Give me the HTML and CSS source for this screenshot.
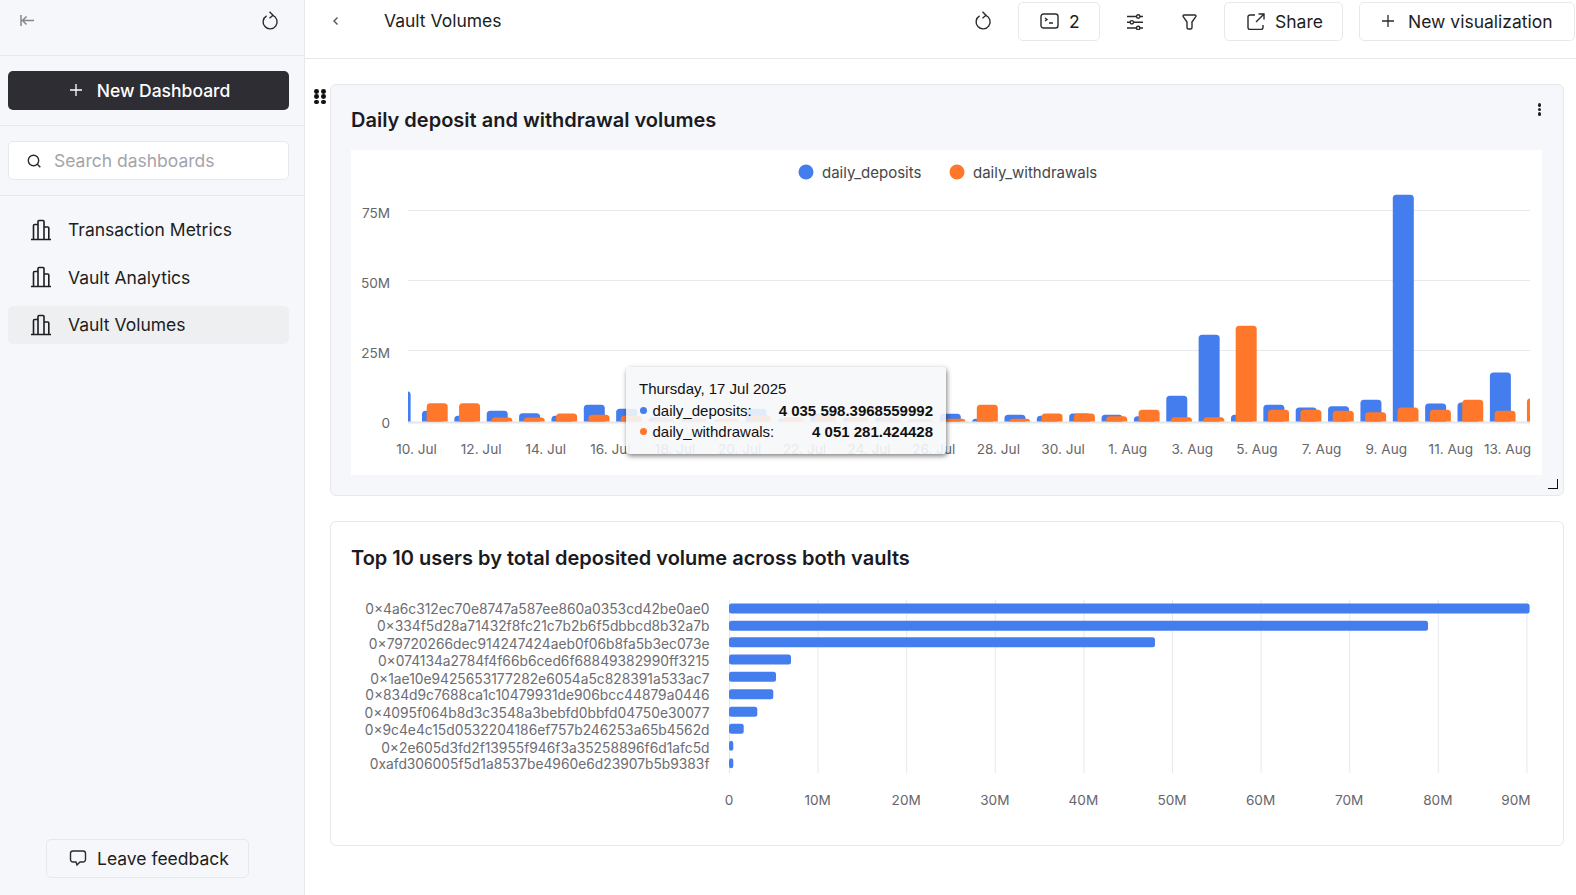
FILE: index.html
```html
<!DOCTYPE html>
<html lang="en">
<head>
    <meta charset="UTF-8">
    <title>Vault Volumes</title>
    <link rel="stylesheet" href="styles.css">
</head>
<body>
    <aside class="sidebar">
        <div class="side-top">
            <svg class="icon-collapse" width="14" height="11" viewBox="0 0 14 11"><path d="M1 0v11M14 5.500H2.500M6.500 1.500l-4 4 4 4"/></svg>
            <svg class="icon" width="18" height="20" viewBox="0 0 18 20"><path d="M11.800 4.400a7 7 0 1 1-6.200.4M8.500.8 12 4.200 8.500 7.200"/></svg>
        </div>
        <div class="side-section">
            <button class="btn-dark">
                <svg class="icon-plus" width="14" height="14" viewBox="0 0 14 14"><path d="M7 1v12M1 7h12"/></svg>
                New Dashboard
            </button>
        </div>
        <div class="side-section">
            <div class="search">
                <svg class="icon" width="16" height="16" viewBox="0 0 16 16"><circle cx="7.500" cy="7.500" r="5.200"/><path d="m11.300 11.300 3 3"/></svg>
                <span>Search dashboards</span>
            </div>
        </div>
        <nav class="dash-list">
            <a class="dash-item"><svg class="icon icon-bars" width="22" height="22" viewBox="0 0 22 22"><path d="M1 20.500h20M3.500 20V6.500a1 1 0 0 1 1-1H8M8 20V2.500a1 1 0 0 1 1-1h4a1 1 0 0 1 1 1V20M14 8h3.800a1 1 0 0 1 1 1v11"/></svg>Transaction Metrics</a>
            <a class="dash-item"><svg class="icon icon-bars" width="22" height="22" viewBox="0 0 22 22"><path d="M1 20.500h20M3.500 20V6.500a1 1 0 0 1 1-1H8M8 20V2.500a1 1 0 0 1 1-1h4a1 1 0 0 1 1 1V20M14 8h3.800a1 1 0 0 1 1 1v11"/></svg>Vault Analytics</a>
            <a class="dash-item active"><svg class="icon icon-bars" width="22" height="22" viewBox="0 0 22 22"><path d="M1 20.500h20M3.500 20V6.500a1 1 0 0 1 1-1H8M8 20V2.500a1 1 0 0 1 1-1h4a1 1 0 0 1 1 1V20M14 8h3.800a1 1 0 0 1 1 1v11"/></svg>Vault Volumes</a>
        </nav>
        <button class="btn-feedback">
            <svg class="icon" width="18" height="18" viewBox="0 0 18 18"><path d="M4 2h10a2.500 2.500 0 0 1 2.500 2.500v6A2.500 2.500 0 0 1 14 13h-3l-3 3-1-3H4a2.500 2.500 0 0 1-2.500-2.500v-6A2.500 2.500 0 0 1 4 2z"/></svg>
            Leave feedback
        </button>
    </aside>

    <main class="main">
        <header class="topbar">
            <svg class="icon chevron" width="8" height="10" viewBox="0 0 8 10"><path d="M5.500 1.500 2 5l3.500 3.500"/></svg>
            <h1 class="page-title">Vault Volumes</h1>
            <svg class="icon reload" width="18" height="20" viewBox="0 0 18 20"><path d="M11.800 4.400a7 7 0 1 1-6.200.4M8.500.8 12 4.200 8.500 7.200"/></svg>
            <button class="btn btn-queries">
                <svg class="icon" width="19" height="16" viewBox="0 0 19 16"><rect x="1" y="1" width="17" height="14" rx="2.500"/><path d="m5 5 2 1.500L5 8M9 10h4"/></svg>
                2
            </button>
            <svg class="icon sliders" width="16" height="16" viewBox="0 0 16 16"><path d="M0 2.500h9.500M13 2.500h3M0 8.300h3M6.500 8.300H16M0 14h9.500M13 14h3"/><circle cx="11.200" cy="2.500" r="1.700"/><circle cx="4.800" cy="8.300" r="1.700"/><circle cx="11.200" cy="14" r="1.700"/></svg>
            <svg class="icon funnel" width="15" height="16" viewBox="0 0 15 16"><path d="M2 1h11a1 1 0 0 1 .8 1.600L10 8v5.500A1.500 1.500 0 0 1 8.500 15h-2A1.500 1.500 0 0 1 5 13.500V8L1.200 2.600A1 1 0 0 1 2 1z"/></svg>
            <button class="btn btn-share">
                <svg class="icon" width="18" height="17" viewBox="0 0 18 17"><path d="M8 2H3a2 2 0 0 0-2 2v10.500a2 2 0 0 0 2 2h11a2 2 0 0 0 2-2V12M9 9l8-8M11.500 1H17v5.500"/></svg>
                Share
            </button>
            <button class="btn btn-new">
                <svg class="icon-plus dark" width="12" height="12" viewBox="0 0 12 12"><path d="M6 0v12M0 6h12"/></svg>
                New visualization
            </button>
        </header>

        <section class="panel panel-gray">
            <span class="drag-handle"><i></i><i></i><i></i><i></i><i></i><i></i></span>
            <span class="kebab"><i></i><i></i><i></i></span>
            <h2 class="panel-title">Daily deposit and withdrawal volumes</h2>
            <div class="chart-box">
                <svg id="daily-chart" class="chart" width="1191" height="325" viewBox="351 150 1191 325"></svg>
                <div class="tooltip">
                    <div class="tooltip-date">Thursday, 17 Jul 2025</div>
                    <div class="tooltip-row"><i class="dot dot-blue"></i><span>daily_deposits:</span><b>4 035 598.3968559992</b></div>
                    <div class="tooltip-row"><i class="dot dot-orange"></i><span>daily_withdrawals:</span><b>4 051 281.424428</b></div>
                </div>
            </div>
            <span class="resize-corner"></span>
        </section>

        <section class="panel panel-white">
            <h2 class="panel-title">Top 10 users by total deposited volume across both vaults</h2>
            <svg id="top-chart" class="chart" width="1212" height="238" viewBox="351 587 1212 238"></svg>
        </section>
    </main>

    <script src="chart.js"></script>
</body>
</html>
```

FILE: styles.css
```css
* {
    box-sizing: border-box;
}
body {
    margin: 0;
    height: 895px;
    overflow: hidden;
    display: flex;
    font-family: Inter, "Noto Sans", sans-serif;
    font-size: 17.500px;
    color: #1d1d22;
    background-color: #fff;
}
button {
    font-family: inherit;
    font-size: 17.500px;
    color: inherit;
    cursor: pointer;
}
.icon {
    fill: none;
    stroke: #2a2a2f;
    stroke-width: 1.4;
    flex-shrink: 0;
}
.icon-bars {
    stroke: #1d1d22;
    stroke-width: 1.6;
}
.icon-collapse {
    margin-top: 4px;
    fill: none;
    stroke: #85858b;
    stroke-width: 1.5;
}
.icon-plus {
    fill: none;
    stroke: #fff;
    stroke-width: 1.3;
}
.icon-plus.dark {
    stroke: #2a2a2f;
}

/* sidebar */
.sidebar {
    width: 305px;
    flex-shrink: 0;
    display: flex;
    flex-direction: column;
    background-color: #f5f7fa;
    border-right: 1px solid #e6e8ec;
    padding-bottom: 17px;
}
.side-top {
    height: 56px;
    display: flex;
    align-items: flex-start;
    justify-content: space-between;
    padding: 11px 25px 0 20px;
    border-bottom: 1px solid #e6e8ec;
}
.side-section {
    height: 70px;
    padding: 15px 15px 0 8px;
    border-bottom: 1px solid #e6e8ec;
}
.btn-dark {
    width: 281px;
    height: 39px;
    display: flex;
    align-items: center;
    justify-content: center;
    gap: 14px;
    padding: 0 0 1px 2px;
    border: none;
    border-radius: 5px;
    color: #fff;
    font-weight: 500;
    background-color: #2e2d33;
}
.search {
    width: 281px;
    height: 39px;
    display: flex;
    align-items: center;
    gap: 12px;
    padding-left: 17px;
    color: #a3a4aa;
    background-color: #fff;
    border: 1px solid #e6e8ec;
    border-radius: 5px;
}
.dash-list {
    padding: 15px 15px 0 8px;
}
.dash-item {
    height: 38px;
    display: flex;
    align-items: center;
    gap: 16px;
    padding-left: 22px;
    padding-bottom: 1px;
    margin-bottom: 9.500px;
    border-radius: 5px;
}
.dash-item.active {
    background-color: #eeeff1;
}
.btn-feedback {
    width: 203px;
    height: 39px;
    margin: auto 0 0 46px;
    display: flex;
    align-items: center;
    gap: 10px;
    padding: 0 0 1px 22px;
    background-color: #f5f7fa;
    border: 1px solid #e6e8ec;
    border-radius: 5px;
}

/* top bar */
.main {
    flex: 1;
    min-width: 0;
}
.topbar {
    height: 59px;
    display: flex;
    align-items: flex-start;
    padding: 2px 1px 0 27px;
    border-bottom: 1px solid #e6e8ec;
}
.chevron {
    margin-top: 14px;
    stroke: #55555b;
}
.page-title {
    margin: 6px 0 0 44px;
    font-size: 17.500px;
    font-weight: 400;
    line-height: 26px;
}
.reload {
    margin: 9px 0 0 auto;
}
.btn {
    height: 39px;
    display: flex;
    align-items: center;
    background-color: #fff;
    border: 1px solid #e6e8ec;
    border-radius: 5px;
    padding-top: 0;
    padding-bottom: 1px;
    padding-right: 0;
}
.btn-queries {
    width: 82px;
    margin-left: 26px;
    gap: 10px;
    padding-left: 21px;
}
.sliders {
    margin: 12px 0 0 27px;
}
.funnel {
    margin: 12px 0 0 38.500px;
}
.btn-share {
    width: 119px;
    margin-left: 27.500px;
    gap: 10px;
    padding-left: 22px;
}
.btn-new {
    width: 216px;
    margin-left: 16px;
    gap: 14px;
    padding-left: 22px;
}

/* panels */
.panel {
    position: relative;
    margin: 25px 12px 0 25px;
    padding: 0 21px 19px 20px;
    height: 325px;
    border: 1px solid #e6e8ec;
    border-radius: 6px;
}
.panel-gray {
    height: 412px;
    background-color: #f5f7fa;
}
.panel-title {
    margin: 0;
    height: 65px;
    padding-top: 21px;
    font-size: 20px;
    font-weight: 600;
    line-height: 28px;
    color: #1a1a1f;
}
.panel-white .panel-title {
    padding-top: 22px;
}
.chart-box {
    position: relative;
    height: 325px;
    background-color: #fff;
}
.chart {
    display: block;
    overflow: hidden;
    font-size: 13.600px;
}
.chart text {
    fill: #66666c;
}
.chart .legend-text {
    font-size: 15px;
    fill: #46464c;
}
.chart .addr {
    font-size: 13.800px;
    fill: #6c6c72;
}
.drag-handle {
    position: absolute;
    left: -17px;
    top: 4px;
    width: 12px;
    display: grid;
    grid-template-columns: 5px 5px;
    gap: 0.500px 2px;
}
.drag-handle i {
    width: 4.800px;
    height: 4.800px;
    border-radius: 50%;
    background-color: #111;
}
.kebab {
    position: absolute;
    right: 22px;
    top: 18px;
    display: flex;
    flex-direction: column;
    gap: 1px;
}
.kebab i {
    width: 3.500px;
    height: 3.500px;
    border-radius: 50%;
    background-color: #222;
}
.resize-corner {
    position: absolute;
    right: 5px;
    bottom: 6px;
    width: 10px;
    height: 10px;
    border-right: 1px solid #111;
    border-bottom: 1px solid #111;
}

/* tooltip */
.tooltip {
    position: absolute;
    left: 275px;
    top: 217px;
    width: 320px;
    height: 87px;
    padding: 10px 13px 0 14px;
    font-family: "Liberation Sans", Arial, sans-serif;
    font-size: 15px;
    color: #111;
    background-color: rgba(245, 247, 250, 0.9);
    border-radius: 4px;
    box-shadow: 1px 2px 5px rgba(0, 0, 0, 0.5);
}
.tooltip-date {
    margin-left: -1px;
    line-height: 23px;
}
.tooltip-row {
    display: flex;
    align-items: center;
    line-height: 21px;
}
.tooltip-row b {
    margin-left: auto;
}
.dot {
    width: 7px;
    height: 7px;
    margin-right: 5.500px;
    border-radius: 50%;
}
.dot-blue {
    background-color: #447dee;
}
.dot-orange {
    background-color: #ff772a;
}
```

FILE: chart.js
```js
var NS = 'http://www.w3.org/2000/svg';
var BLUE = '#447dee';
var ORANGE = '#ff772a';

function add(svg, tag, attrs, text) {
    var el = document.createElementNS(NS, tag);
    for (var k in attrs) el.setAttribute(k, attrs[k]);
    if (text) el.textContent = text;
    svg.appendChild(el);
    return el;
}

function drawDaily() {
    var svg = document.getElementById('daily-chart');
    var base = 421.5;

    [210.5, 280.5, 350.5].forEach(function (y) {
        add(svg, 'line', { x1: 408, x2: 1530, y1: y, y2: y, stroke: '#e8e9ec' });
    });
    add(svg, 'line', { x1: 408, x2: 1530, y1: 422.5, y2: 422.5, stroke: '#e4e5e9', 'stroke-width': 2 });

    [['75M', 214], ['50M', 284], ['25M', 354], ['0', 424]].forEach(function (t) {
        add(svg, 'text', { x: 390, y: t[1], 'text-anchor': 'end', 'dominant-baseline': 'middle' }, t[0]);
    });

    // legend
    add(svg, 'circle', { cx: 806, cy: 172, r: 7.5, fill: BLUE });
    add(svg, 'text', { x: 822, y: 173.5, 'class': 'legend-text', 'dominant-baseline': 'middle' }, 'daily_deposits');
    add(svg, 'circle', { cx: 957, cy: 172, r: 7.5, fill: ORANGE });
    add(svg, 'text', { x: 973, y: 173.5, 'class': 'legend-text', 'dominant-baseline': 'middle' }, 'daily_withdrawals');

    // bars, index 0 is the one cut off by the plot edge
    var blue = [30, 10.7, 5.7, 10.7, 8.3, 5.7, 16.7, 12.7, 4, 3, 2, 12.7, 3, 7.7, 4, 4, 2, 7.7, 2.7, 6.7, 5.7, 8, 6.7, 5.3, 25.7, 86.7, 6.7, 16.7, 14, 15.3, 21.7, 226.7, 18, 19, 49, 0];
    var orange = [0, 18.3, 18.3, 4, 4, 8, 6.7, 5.7, 2.7, 3, 3, 5.7, 4.3, 5.7, 4.3, 3, 2.3, 2.7, 16.7, 2.7, 8, 8, 5.3, 11.7, 4.3, 4.3, 95.7, 11.7, 11.7, 10.7, 9.3, 14, 11.7, 21.7, 10.7, 23];

    var clip = add(add(svg, 'defs', {}), 'clipPath', { id: 'plot' });
    add(clip, 'rect', { x: 408, y: 180, width: 1122, height: base - 180 });
    var bars = add(svg, 'g', { 'clip-path': 'url(#plot)' });
    blue.forEach(function (h, n) {
        var x = 422 + (n - 1) * 32.36;
        if (h) add(bars, 'rect', { x: x, y: base - h, width: 21, height: h + 5, rx: 3.5, fill: BLUE });
    });
    orange.forEach(function (h, n) {
        var x = 426.7 + (n - 1) * 32.36;
        if (h) add(bars, 'rect', { x: x, y: base - h, width: 21, height: h + 5, rx: 3.5, fill: ORANGE });
    });

    var labels = ['10. Jul', '12. Jul', '14. Jul', '16. Jul', '18. Jul', '20. Jul', '22. Jul', '24. Jul', '26. Jul', '28. Jul', '30. Jul', '1. Aug', '3. Aug', '5. Aug', '7. Aug', '9. Aug', '11. Aug'];
    labels.forEach(function (t, n) {
        add(svg, 'text', { x: 416.5 + n * 64.65, y: 450, 'text-anchor': 'middle', 'dominant-baseline': 'middle' }, t);
    });
    add(svg, 'text', { x: 1507.5, y: 450, 'text-anchor': 'middle', 'dominant-baseline': 'middle' }, '13. Aug');
}

function drawTop() {
    var svg = document.getElementById('top-chart');
    var left = 729;
    var step = 88.6;

    for (var n = 0; n <= 9; n++) {
        var gx = left + n * step + 0.5;
        add(svg, 'line', { x1: gx, x2: gx, y1: 600, y2: 773, stroke: n ? '#e8e9ec' : '#e4e5e9' });
        var lx = n == 9 ? 1516 : left + n * step;
        add(svg, 'text', { x: lx, y: 801, 'text-anchor': 'middle', 'dominant-baseline': 'middle' }, n ? n * 10 + 'M' : '0');
    }

    // address, bar length, bar centre, label centre
    var rows = [
        ['0×4a6c312ec70e8747a587ee860a0353cd42be0ae0', 800.6, 609, 610],
        ['0×334f5d28a71432f8fc21c7b2b6f5dbbcd8b32a7b', 699, 626.3, 627.5],
        ['0×79720266dec914247424aeb0f06b8fa5b3ec073e', 426, 642.7, 645],
        ['0×074134a2784f4f66b6ced6f68849382990ff3215', 62, 660, 662],
        ['0×1ae10e9425653177282e6054a5c828391a533ac7', 47, 677.3, 680],
        ['0×834d9c7688ca1c10479931de906bcc44879a0446', 44.3, 694.7, 696.5],
        ['0×4095f064b8d3c3548a3bebfd0bbfd04750e30077', 28.3, 712.3, 714.5],
        ['0×9c4e4c15d0532204186ef757b246253a65b4562d', 14.7, 729.3, 731.5],
        ['0×2e605d3fd2f13955f946f3a35258896f6d1afc5d', 4.3, 746.3, 749],
        ['0xafd306005f5d1a8537be4960e6d23907b5b9383f', 4.3, 763.7, 765.5]
    ];
    rows.forEach(function (r) {
        add(svg, 'rect', { x: left, y: r[2] - 5.5, width: r[1], height: 10, rx: 2.5, fill: BLUE });
        add(svg, 'text', { x: 709.5, y: r[3], 'class': 'addr', 'text-anchor': 'end', 'dominant-baseline': 'middle' }, r[0]);
    });
}

drawDaily();
drawTop();
```
